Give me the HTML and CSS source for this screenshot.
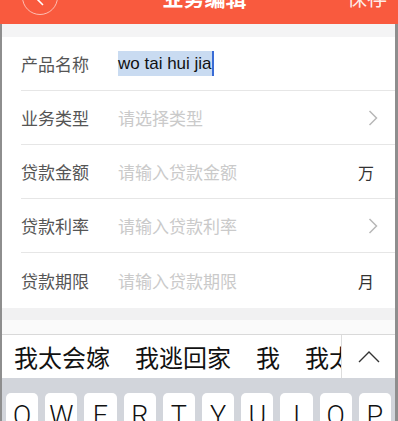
FILE: index.html
```html
<!DOCTYPE html>
<html>
<head>
	<title>业务编辑</title>
	<meta charset="utf-8"/>
	<link rel="stylesheet" href="styles.css">
</head>
<body>
<div class="page">
	<div class="topbar">
		<div class="topbar-inner">
			<span class="back">
				<svg width="34" height="34" viewBox="0 0 34 34"><polyline points="20,9 12,17 20,25" fill="none" stroke="#fff" stroke-width="1.6"/></svg>
			</span>
			<h1>业务编辑</h1>
			<span class="save">保存</span>
		</div>
	</div>

	<div class="screen">
		<div class="gap"></div>
		<ul class="form">
			<li class="row">
				<span class="label">产品名称</span>
				<span class="value"><span class="selected">wo tai hui jia</span></span>
			</li>
			<li class="row">
				<span class="label">业务类型</span>
				<span class="value holder">请选择类型</span>
				<span class="extra"><svg width="10" height="16" viewBox="0 0 10 16"><polyline points="1.5,1 8.5,8 1.5,15" fill="none" stroke="#b8b8b8" stroke-width="1.5"/></svg></span>
			</li>
			<li class="row">
				<span class="label">贷款金额</span>
				<span class="value holder">请输入贷款金额</span>
				<span class="extra unit">万</span>
			</li>
			<li class="row">
				<span class="label">贷款利率</span>
				<span class="value holder">请输入贷款利率</span>
				<span class="extra"><svg width="10" height="16" viewBox="0 0 10 16"><polyline points="1.5,1 8.5,8 1.5,15" fill="none" stroke="#b8b8b8" stroke-width="1.5"/></svg></span>
			</li>
			<li class="row">
				<span class="label">贷款期限</span>
				<span class="value holder">请输入贷款期限</span>
				<span class="extra unit">月</span>
			</li>
		</ul>
		<div class="gap gap-bottom"></div>
		<div class="gap gap-light"></div>

		<div class="candidates">
			<div class="words">
				<span>我太会嫁</span>
				<span>我逃回家</span>
				<span>我</span>
				<span>我太会</span>
			</div>
			<div class="more">
				<svg width="22" height="12" viewBox="0 0 22 12"><polyline points="1,11 11,1 21,11" fill="none" stroke="#333" stroke-width="1.4"/></svg>
			</div>
		</div>
		<div class="keyboard">
			<span class="key">Q</span>
			<span class="key">W</span>
			<span class="key">E</span>
			<span class="key">R</span>
			<span class="key">T</span>
			<span class="key">Y</span>
			<span class="key">U</span>
			<span class="key">I</span>
			<span class="key">O</span>
			<span class="key">P</span>
		</div>
	</div>
</div>
</body>
</html>
```

FILE: styles.css
```css
* {
	margin: 0px;
	padding: 0px;
	box-sizing: border-box;
}

body {
	background-color: #8e8e8e;
	font-family: "Noto Sans CJK SC", sans-serif;
}

.page {
	width: 398px;
	height: 421px;
	overflow: hidden;
}

/* 顶部栏，只露出下半截 */
.topbar {
	height: 24px;
	overflow: hidden;
	background-color: #f95a3e;
}
	.topbar-inner {
		height: 44px;
		margin-top: -25px;
		padding: 0 11px 0 22px;
		display: grid;
		grid-template-columns: 1fr auto 1fr;
		align-items: center;
		color: #fff;
	}
		.back {
			width: 36px;
			height: 36px;
			border: 1px solid rgba(255, 255, 255, 0.6);
			border-radius: 50%;
			display: flex;
		}
		.topbar h1 {
			font-size: 21px;
			font-weight: bold;
			line-height: 44px;
		}
		.save {
			justify-self: end;
			font-size: 20px;
			color: rgba(255, 255, 255, 0.9);
		}

.screen {
	margin: 0 3px 0 2px;
	background-color: #fff;
	height: 397px;
	display: flex;
	flex-direction: column;
}
	.screen > * {
		flex-shrink: 0;
	}

.gap {
	height: 13px;
	background-color: #f4f4f5;
}
.gap-bottom {
	height: 12px;
	background-color: #f1f1f2;
}
.gap-light {
	height: 15px;
	background-color: #fafafa;
	border-bottom: 1px solid #d9d9d9;
}

.form {
	list-style: none;
}
	.row {
		height: 54px;
		margin-left: 19px;
		border-bottom: 1px solid #e6e6e6;
		display: flex;
		align-items: center;
		font-size: 17px;
	}
	.row:last-child {
		height: 55px;
		border-bottom: none;
	}
		.label {
			width: 97px;
			color: #555;
		}
		.value {
			flex: 1;
			display: flex;
			align-items: center;
		}
		.holder {
			color: #cacaca;
		}
		.selected {
			font-family: "Liberation Sans", sans-serif;
			color: #111;
			background-color: #c9dbf1;
			line-height: 25px;
			border-right: 2px solid #3a6cd6;
		}
		.extra {
			width: 40px;
			padding-right: 17px;
			display: flex;
			justify-content: flex-end;
		}
		.unit {
			font-size: 16px;
			color: #333;
			padding-right: 21px;
		}

/* 输入法候选栏 */
.candidates {
	height: 43px;
	display: flex;
	background-color: #fff;
}
	.words {
		flex: 1;
		overflow: hidden;
		white-space: nowrap;
		display: flex;
		align-items: center;
		gap: 25px;
		padding-left: 12px;
		font-size: 24px;
		color: #111;
	}
	.more {
		width: 54px;
		border-left: 1px solid #ddd;
		display: flex;
		align-items: center;
		justify-content: center;
	}

.keyboard {
	flex: 1 1 auto;
	min-height: 0;
	overflow: hidden;
	background-color: #d2d5db;
	padding: 15px 4px 0 4px;
	display: flex;
	gap: 7px;
}
	.key {
		flex: 1;
		height: 42px;
		background-color: #fff;
		border-radius: 5px;
		text-align: center;
		font-family: Roboto, sans-serif;
		font-weight: 300;
		font-size: 27px;
		line-height: 30px;
		padding-top: 8px;
		color: #111;
	}
```
